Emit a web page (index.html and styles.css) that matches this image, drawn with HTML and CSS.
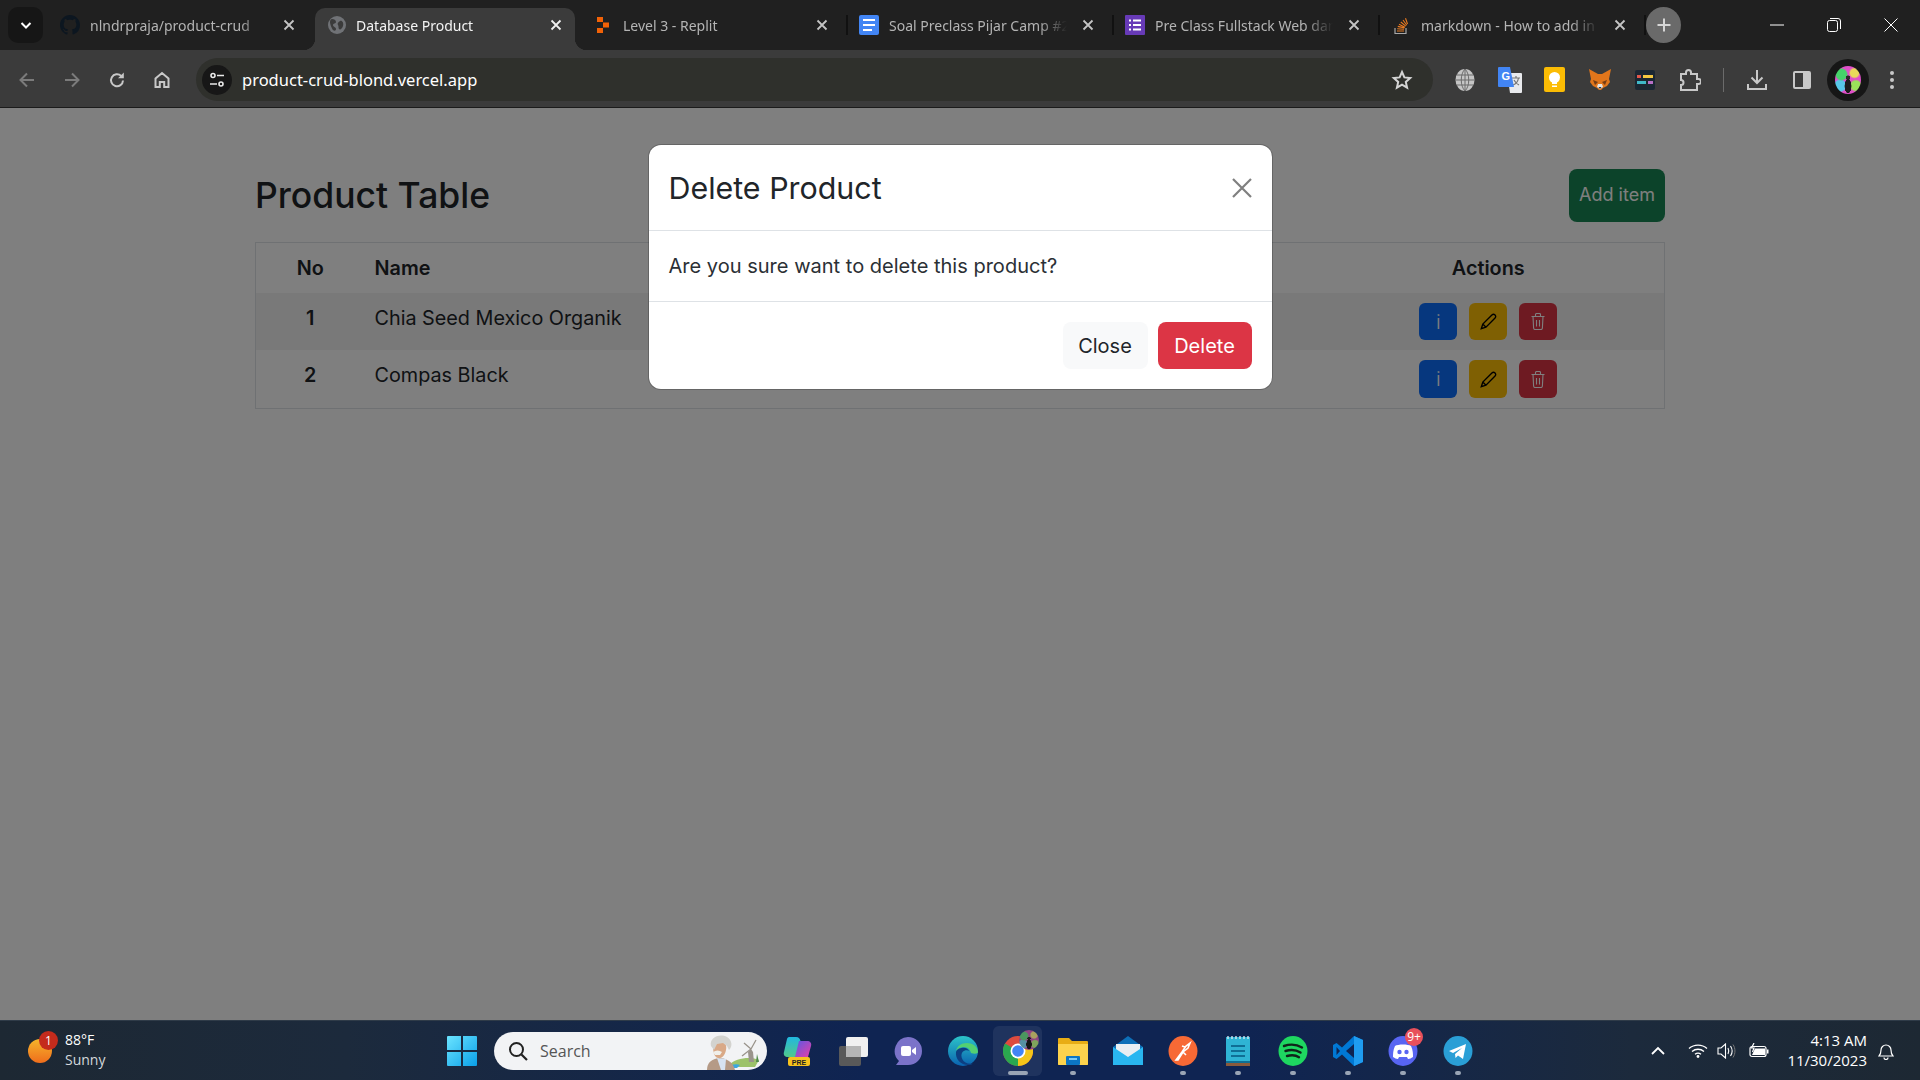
FILE: index.html
```html
<!DOCTYPE html>
<html lang="en">
<head>
  <meta charset="UTF-8" />
  <title>Database Product</title>
  <link rel="stylesheet" href="styles.css">
</head>
<body>
  <!-- Tab strip -->
  <div class="tabstrip">
    <button class="tab-search"><svg width="14" height="14" viewBox="0 0 14 14"><path d="M2.5 5 7 9.5 11.500 5" fill="none" stroke="#fff" stroke-width="2"/></svg></button>

    <div class="tab">
      <svg class="favicon" viewBox="0 0 16 16"><path fill="#0c1620" d="M8 0C3.58 0 0 3.58 0 8c0 3.54 2.29 6.53 5.47 7.59.4.07.55-.17.55-.38 0-.19-.01-.82-.01-1.49-2.01.37-2.53-.49-2.69-.94-.09-.23-.48-.94-.82-1.13-.28-.15-.68-.52-.01-.53.63-.01 1.08.58 1.23.82.72 1.21 1.87.87 2.33.66.07-.52.28-.87.51-1.07-1.78-.2-3.64-.89-3.64-3.95 0-.87.31-1.59.82-2.15-.08-.2-.36-1.02.08-2.12 0 0 .67-.21 2.2.82.64-.18 1.32-.27 2-.27.68 0 1.36.09 2 .27 1.53-1.04 2.2-.82 2.2-.82.44 1.1.16 1.92.08 2.12.51.56.82 1.27.82 2.15 0 3.07-1.87 3.75-3.65 3.95.29.25.54.73.54 1.48 0 1.07-.01 1.93-.01 2.2 0 .21.15.46.55.38A8.013 8.013 0 0016 8c0-4.42-3.58-8-8-8z"/></svg>
      <span class="tab-title">nlndrpraja/product-crud</span>
      <svg class="tab-close" viewBox="0 0 16 16"><path d="M3.500 3.500l9 9m0-9l-9 9" stroke="#c4c4c4" stroke-width="1.800"/></svg>
    </div>

    <div class="tab active">
      <svg class="favicon" viewBox="0 0 20 20"><circle cx="10" cy="10" r="9" fill="#707276"/><path d="M5 4c2 0 4 1 4 3S6 8 6 10s3 2 3 4-2 2-3 1-3-6-3-8 1-3 2-3zM13 6c2-1 4 2 3 5s-3 4-4 3 0-3-1-4 0-3 2-4z" fill="#3b3b3b"/></svg>
      <span class="tab-title">Database Product</span>
      <svg class="tab-close" viewBox="0 0 16 16"><path d="M3.500 3.500l9 9m0-9l-9 9" stroke="#f0f0f0" stroke-width="1.800"/></svg>
    </div>

    <div class="tab">
      <svg class="favicon" viewBox="0 0 20 20"><path fill="#f26207" d="M4 2h6v5H4zM10 7.500h6v5h-6zM4 13h6v5H4z"/></svg>
      <span class="tab-title">Level 3 - Replit</span>
      <svg class="tab-close" viewBox="0 0 16 16"><path d="M3.500 3.500l9 9m0-9l-9 9" stroke="#c4c4c4" stroke-width="1.800"/></svg>
      <i class="tab-sep"></i>
    </div>

    <div class="tab">
      <svg class="favicon" viewBox="0 0 20 20"><rect width="20" height="20" rx="2" fill="#4285f4"/><path fill="#fff" d="M4 4h12v2H4zM4 9h12v2H4zM4 14h9v2H4z"/></svg>
      <span class="tab-title">Soal Preclass Pijar Camp #2</span>
      <svg class="tab-close" viewBox="0 0 16 16"><path d="M3.500 3.500l9 9m0-9l-9 9" stroke="#c4c4c4" stroke-width="1.800"/></svg>
      <i class="tab-sep"></i>
    </div>

    <div class="tab">
      <svg class="favicon" viewBox="0 0 20 20"><rect width="20" height="20" rx="1" fill="#673ab7"/><path fill="#fff" d="M4 4.500h2v2H4zM8 4.500h8v2H8zM4 9h2v2H4zM8 9h8v2H8zM4 13.500h2v2H4zM8 13.500h8v2H8z"/></svg>
      <span class="tab-title">Pre Class Fullstack Web dan</span>
      <svg class="tab-close" viewBox="0 0 16 16"><path d="M3.500 3.500l9 9m0-9l-9 9" stroke="#c4c4c4" stroke-width="1.800"/></svg>
      <i class="tab-sep"></i>
    </div>

    <div class="tab">
      <svg class="favicon" viewBox="0 0 20 20"><path d="M4 13v5.500h11V13" fill="none" stroke="#a8a8a8" stroke-width="1.200"/><path d="M6 16h7M6.200 13.800l6.800.5M6.800 11.400l6.600 1.500M8 9.200l6 3M9.800 7l5 4.200M12 5l3.800 5.300M14.500 3.200l2 5.800" fill="none" stroke="#e87a21" stroke-width="1.100"/></svg>
      <span class="tab-title">markdown - How to add in</span>
      <svg class="tab-close" viewBox="0 0 16 16"><path d="M3.500 3.500l9 9m0-9l-9 9" stroke="#c4c4c4" stroke-width="1.800"/></svg>
      <i class="tab-sep"></i>
    </div>

    <button class="new-tab"><svg width="16" height="16" viewBox="0 0 16 16"><path d="M8 1.500v13M1.500 8h13" stroke="#d6d6d6" stroke-width="2"/></svg></button>

    <div class="window-controls">
      <svg width="14" height="14" viewBox="0 0 14 14"><path d="M0 7h14" stroke="#fff"/></svg>
      <svg width="14" height="14" viewBox="0 0 14 14"><rect x=".5" y="2.500" width="10" height="11" rx="2" fill="none" stroke="#fff"/><path d="M3 .5h8a2.500 2.500 0 0 1 2.500 2.500v8" fill="none" stroke="#fff"/></svg>
      <svg width="14" height="14" viewBox="0 0 14 14"><path d="M.5.5l13 13m0-13l-13 13" stroke="#fff"/></svg>
    </div>
  </div>

  <!-- Address bar -->
  <div class="toolbar">
    <div class="nav-buttons">
      <svg width="18" height="18" viewBox="0 0 18 18"><path d="M16 9H3m6-6.500L2.500 9 9 15.500" fill="none" stroke="#7b7b7b" stroke-width="2"/></svg>
      <svg width="18" height="18" viewBox="0 0 18 18"><path d="M2 9h13M9 2.500 15.500 9 9 15.500" fill="none" stroke="#7b7b7b" stroke-width="2"/></svg>
      <svg width="18" height="18" viewBox="0 0 18 18"><path d="M15 9.500a6 6 0 1 1-1.800-4.600" fill="none" stroke="#c8c8c8" stroke-width="2"/><path d="M15.800 1.500v5.800H10z" fill="#c8c8c8"/></svg>
      <svg width="18" height="18" viewBox="0 0 18 18"><path d="M2.500 16V7.500L9 2l6.500 5.500V16h-4.300v-5H6.800v5z" fill="none" stroke="#c8c8c8" stroke-width="2"/></svg>
    </div>
    <div class="omnibox">
      <span class="site-chip"><svg width="16" height="16" viewBox="0 0 16 16"><g fill="none" stroke="#e8e8e8" stroke-width="1.600"><circle cx="4" cy="3.500" r="2"/><path d="M8 3.500h7M1 12h7"/><circle cx="12" cy="12" r="2"/></g></svg></span>
      <span class="url">product-crud-blond.vercel.app</span>
      <svg class="star" width="22" height="22" viewBox="0 0 22 22"><path d="M11 3l2.400 5.400 5.800.6-4.400 3.900 1.300 5.800L11 15.700l-5.100 3 1.300-5.800L2.800 9l5.800-.6z" fill="none" stroke="#d4d4d4" stroke-width="2"/></svg>
    </div>
    <div class="extensions">
      <span class="ext"><svg width="20" height="24" viewBox="0 0 20 24"><ellipse cx="10" cy="12" rx="9.500" ry="11" fill="#c5c5c5"/><path d="M.5 12h19M1.500 7h17M1.500 17h17M10 1v22M10 1C5 6 5 18 10 23M10 1c5 5 5 17 0 22" fill="none" stroke="#6a6a6a"/></svg></span>
      <span class="ext"><svg width="24" height="26" viewBox="0 0 24 26"><path d="M9 6h14a1 1 0 0 1 1 1v18a1 1 0 0 1-1 1H12z" fill="#e8eaed"/><path d="M14 11h8m-4-2v2m2.500 0c-.5 3-2.500 6-5.500 7m1-5c1 2 3 4 5 5" fill="none" stroke="#777" stroke-width="1.200"/><path d="M1 0h11l4 20H1a1 1 0 0 1-1-1V1a1 1 0 0 1 1-1z" fill="#4285f4"/><text x="3.500" y="13" class="ext-g">G</text></svg></span>
      <span class="ext"><svg width="21" height="25" viewBox="0 0 21 25"><rect width="21" height="25" rx="2" fill="#fbbc04"/><circle cx="10.500" cy="10.500" r="5.500" fill="#fff"/><path d="M8 14h5v3H8z" fill="#fff"/><path d="M8 18.500h5v1.500H8z" fill="#fff"/></svg></span>
      <span class="ext"><svg width="22" height="22" viewBox="0 0 22 22"><path d="M0 0l9 5h4l9-5-2 10 1 3-3 4-4 2-2 2h-2l-2-2-4-2-3-4 1-3z" fill="#e2761b"/><path d="M4 11l5 2-3 3zM18 11l-5 2 3 3z" fill="#763d16"/><path d="M9 15h4l1 3-3 2-3-2z" fill="#e4e4e4"/><path d="M9.500 18h3l-1.500 2z" fill="#233447"/></svg></span>
      <span class="ext"><svg width="20" height="20" viewBox="0 0 20 20"><rect width="20" height="20" rx="2" fill="#1b2733"/><rect x="2" y="5" width="4" height="3" fill="#e2574c"/><rect x="8" y="5" width="10" height="3" fill="#f5c842"/><rect x="2" y="11" width="9" height="3" fill="#3fb9c9"/><rect x="13" y="11" width="5" height="3" fill="#b86fc6"/></svg></span>
      <span class="ext"><svg width="22" height="22" viewBox="0 0 22 22"><path d="M2 5h5V3.500a2.500 2.500 0 0 1 5 0V5h6v5h1.500a2.500 2.500 0 0 1 0 5H18v6H2v-5a2.500 2.500 0 0 0 0-5z" fill="none" stroke="#c8c8c8" stroke-width="2"/></svg></span>
      <i class="toolbar-sep"></i>
      <span class="ext"><svg width="20" height="22" viewBox="0 0 20 22"><path d="M10 1v13m-5.500-5.500L10 14l5.500-5.500M1 15v5h18v-5" fill="none" stroke="#c8c8c8" stroke-width="2"/></svg></span>
      <span class="ext"><svg width="18" height="18" viewBox="0 0 18 18"><rect x="1" y="1" width="16" height="16" rx="1" fill="none" stroke="#c8c8c8" stroke-width="2"/><rect x="10" y="1" width="7" height="16" fill="#c8c8c8"/></svg></span>
      <span class="ext profile"><span class="avatar"></span></span>
      <span class="ext"><svg width="4" height="18" viewBox="0 0 4 18"><circle cx="2" cy="2" r="2" fill="#c8c8c8"/><circle cx="2" cy="9" r="2" fill="#c8c8c8"/><circle cx="2" cy="16" r="2" fill="#c8c8c8"/></svg></span>
    </div>
  </div>

  <!-- Page -->
  <main class="page">
    <div class="container">
      <div class="page-header">
        <h1>Product Table</h1>
        <button class="btn btn-success">Add item</button>
      </div>
      <table class="product-table">
        <thead>
          <tr><th class="col-no">No</th><th class="col-name">Name</th><th class="col-actions">Actions</th></tr>
        </thead>
        <tbody>
          <tr class="striped">
            <th class="col-no">1</th>
            <td>Chia Seed Mexico Organik</td>
            <td class="col-actions">
              <div class="actions">
                <button class="icon-btn blue">i</button>
                <button class="icon-btn yellow"><svg width="17" height="17" viewBox="0 0 20 20"><path d="M1.500 18.500l1.800-5.500L14 2.300a2.300 2.300 0 0 1 3.700 3.700L7 16.700zM3.300 13 7 16.700" fill="none" stroke="#000" stroke-width="1.600"/></svg></button>
                <button class="icon-btn red"><svg width="14" height="17" viewBox="0 0 14 17"><path d="M.5 3.500h13M4.500 3.500V1.500a1 1 0 0 1 1-1h3a1 1 0 0 1 1 1v2M2 3.500l.6 11.500a1.500 1.500 0 0 0 1.500 1.500h5.800a1.500 1.500 0 0 0 1.500-1.500L12 3.500M5.500 7v6.500M8.500 7v6.500" fill="none" stroke="#fff" stroke-width="1.100"/></svg></button>
              </div>
            </td>
          </tr>
          <tr>
            <th class="col-no">2</th>
            <td>Compas Black</td>
            <td class="col-actions">
              <div class="actions">
                <button class="icon-btn blue">i</button>
                <button class="icon-btn yellow"><svg width="17" height="17" viewBox="0 0 20 20"><path d="M1.500 18.500l1.800-5.500L14 2.300a2.300 2.300 0 0 1 3.700 3.700L7 16.700zM3.300 13 7 16.700" fill="none" stroke="#000" stroke-width="1.600"/></svg></button>
                <button class="icon-btn red"><svg width="14" height="17" viewBox="0 0 14 17"><path d="M.5 3.500h13M4.500 3.500V1.500a1 1 0 0 1 1-1h3a1 1 0 0 1 1 1v2M2 3.500l.6 11.500a1.500 1.500 0 0 0 1.500 1.500h5.800a1.500 1.500 0 0 0 1.500-1.500L12 3.500M5.500 7v6.500M8.500 7v6.500" fill="none" stroke="#fff" stroke-width="1.100"/></svg></button>
              </div>
            </td>
          </tr>
        </tbody>
      </table>
    </div>

    <!-- Delete modal -->
    <div class="backdrop">
      <div class="modal">
        <div class="modal-header">
          <h5>Delete Product</h5>
          <svg class="modal-close" width="20" height="20" viewBox="0 0 20 20"><path d="M1 1l18 18M19 1 1 19" stroke="#7f7f7f" stroke-width="2.200"/></svg>
        </div>
        <div class="modal-body">Are you sure want to delete this product?</div>
        <div class="modal-footer">
          <button class="btn btn-light">Close</button>
          <button class="btn btn-danger">Delete</button>
        </div>
      </div>
    </div>
  </main>

  <!-- Taskbar -->
  <footer class="taskbar">
    <div class="weather">
      <span class="sun"><span class="sun-badge">1</span></span>
      <div class="weather-text">
        <span>88°F</span>
        <span class="weather-sub">Sunny</span>
      </div>
    </div>

    <div class="task-center">
      <svg class="start" width="30" height="30" viewBox="0 0 30 30"><defs><linearGradient id="win" x1="0" y1="0" x2="1" y2="1"><stop offset="0" stop-color="#6be4ff"/><stop offset="1" stop-color="#0a9fe8"/></linearGradient></defs><path fill="url(#win)" d="M0 1a1 1 0 0 1 1-1h13v14H0zM16 0h13a1 1 0 0 1 1 1v13H16zM0 16h14v14H1a1 1 0 0 1-1-1zM16 16h14v13a1 1 0 0 1-1 1H16z"/></svg>

      <div class="search-pill">
        <svg width="20" height="20" viewBox="0 0 20 20"><circle cx="8.500" cy="8.500" r="6.500" fill="none" stroke="#222" stroke-width="2"/><path d="M13.500 13.500 19 19" stroke="#222" stroke-width="2.200"/></svg>
        <span>Search</span>
        <svg class="search-art" width="60" height="38" viewBox="0 0 60 38">
          <path d="M26 33c6-7 22-9 30-5l-4 7H30z" fill="#9cc26a"/>
          <path d="M28 33c4-1 7-1 9 0l-3 3h-5z" fill="#3aa7e0"/>
          <path d="M46 30l-1-10 3-3 2 3 1 10z" fill="#9a948c"/>
          <path d="M48 17l-7-6M48 17l5-9M48 17l-9 7" stroke="#9a948c" stroke-width="1.300"/>
          <path d="M53 30l1-8 2 8z" fill="#4f8a4a"/>
          <path d="M4 38c0-8 5-11 12-12 6 0 14 3 16 12z" fill="#b59a86"/>
          <path d="M14 26l4 12h4l1-11z" fill="#d7e3f2"/>
          <path d="M10 15c0-4 4-7 8-6s6 4 5 9-4 9-8 8-5-7-5-11z" fill="#d9a987"/>
          <path d="M8 14C6 6 16 1 24 5c5 3 6 9 2 13l-2-4-4-3-6 1-3 6z" fill="#d3d3cf"/>
          <path d="M10 20c3-2 6-2 9 0l-2 3h-5z" fill="#f0efea"/>
        </svg>
      </div>

      <div class="task-icons">
        <span class="task-icon"><svg width="30" height="30" viewBox="0 0 30 30"><defs><linearGradient id="cop1" x1="0" y1="0" x2="0" y2="1"><stop offset="0" stop-color="#21b8e0"/><stop offset="1" stop-color="#52c98a"/></linearGradient><linearGradient id="cop2" x1="0" y1="0" x2="1" y2="1"><stop offset="0" stop-color="#5a58e6"/><stop offset="1" stop-color="#e83fa6"/></linearGradient></defs><path d="M6 1h7c3 0 4 2 4.500 4L13 21H5c-3 0-5-2-4-5L4 3c.3-1 1-2 2-2z" fill="url(#cop1)"/><path d="M16 5h8c3 0 5 2 4 5l-3 11H12z" fill="url(#cop2)"/><rect x="5" y="21" width="22" height="9" rx="2" fill="#f8c31d"/><text x="16" y="28.500" class="pre">PRE</text></svg></span>
        <span class="task-icon"><svg width="30" height="30" viewBox="0 0 30 30"><rect x="1" y="10" width="22" height="20" rx="2" fill="#595959"/><rect x="8" y="1" width="22" height="20" rx="2" fill="#f0f0f0"/><rect x="8" y="10" width="15" height="11" fill="#b5b5b5"/></svg></span>
        <span class="task-icon"><svg width="30" height="30" viewBox="0 0 30 30"><path d="M15 1a14 14 0 0 1 14 14c0 8-6 14-14 14H3l3-4a14 14 0 0 1 9-24z" fill="#7b73c9"/><rect x="8" y="10" width="10" height="10" rx="2" fill="#fff"/><path d="M19 14l4-3v8l-4-3z" fill="#fff"/></svg></span>
        <span class="task-icon"><svg width="32" height="32" viewBox="0 0 32 32"><defs><linearGradient id="edge" x1="0" y1="0" x2="0" y2="1"><stop offset="0" stop-color="#2cc4c8"/><stop offset="1" stop-color="#0a62b0"/></linearGradient></defs><circle cx="16" cy="16" r="15" fill="url(#edge)"/><path d="M31 17c-.3-6-6-9-11-9-6 0-10 3-11 8 2-3 5-4 8-4 3 0 6 2 7 6 3 1 7 1 7-1z" fill="#53d072"/><path d="M9 17c-1 7 5 13 12 13 2 0 4-.5 5-1.500-5 1-9-1-10.500-4C14 22 14 19 15.500 17c2-2 5-2 7-1-2-3-5-4-8-3-3 .5-5 2-5.500 4z" fill="#0d3f82"/></svg></span>
        <span class="task-icon current"><svg width="30" height="30" viewBox="0 0 30 30"><circle cx="15" cy="15" r="15" fill="#dd4b3e"/><path d="M15 15 28 7.500A15 15 0 0 1 15 30z" fill="#f5c518"/><path d="M15 15 15 30A15 15 0 0 1 2 7.500z" fill="#2aa84f"/><circle cx="15" cy="15" r="7.500" fill="#fff"/><circle cx="15" cy="15" r="5.800" fill="#4285f4"/></svg><span class="avatar chrome-badge"></span></span>
        <span class="task-icon"><svg width="30" height="30" viewBox="0 0 30 30"><path d="M0 3a1 1 0 0 1 1-1h10l3 3h15a1 1 0 0 1 1 1v22a1 1 0 0 1-1 1H1a1 1 0 0 1-1-1z" fill="#e8ad15"/><path d="M0 8h30v20a1 1 0 0 1-1 1H1a1 1 0 0 1-1-1z" fill="#fdd34d"/><rect x="8" y="20" width="14" height="9" rx="1" fill="#0c76c4"/><rect x="11" y="22" width="8" height="2" fill="#7ccbf5"/></svg></span>
        <span class="task-icon"><svg width="30" height="30" viewBox="0 0 30 30"><path d="M0 11 15 0l15 11v18H0z" fill="#0d6fb8"/><path d="M3 8h24v6l-12 8-12-8z" fill="#e9eef2"/><path d="M0 11l15 10 15-10v18H0z" fill="#29b6f0"/></svg></span>
        <span class="task-icon"><svg width="30" height="30" viewBox="0 0 30 30"><ellipse cx="15" cy="15" rx="14.500" ry="15" fill="#f76935"/><path d="M8 24l6-8 4-6 4-3-2 5-5 4-5 8zM17 11l-3-1m1 6 3 3" fill="none" stroke="#fff" stroke-width="1.600"/></svg></span>
        <span class="task-icon"><svg width="24" height="30" viewBox="0 0 24 30"><rect y="1" width="24" height="29" fill="#2fb4d4"/><rect y="27" width="24" height="3" fill="#8a5a3c"/><path d="M0 25h24v2H0zM5 9h14v2H5zM5 14h14v2H5zM5 19h14v2H5z" fill="#0f6f95"/><path d="M2 0v3M6 0v3M10 0v3M14 0v3M18 0v3M22 0v3" stroke="#cfeaf2" stroke-width="1.400"/></svg></span>
        <span class="task-icon"><svg width="30" height="30" viewBox="0 0 30 30"><ellipse cx="15" cy="15" rx="14.500" ry="15" fill="#1ed760"/><path d="M6 10c6-2 13-1.500 18 1.500M7.500 15c5-1.500 11-1 15 1.500M9 20c4-1 9-.8 12 1.200" fill="none" stroke="#10241a" stroke-width="2.400" stroke-linecap="round"/></svg></span>
        <span class="task-icon"><svg width="30" height="30" viewBox="0 0 30 30"><path d="M21 0l9 4v22l-9 4-12-11.500L3.500 23 0 21v-12l3.500-2L9 11.500z" fill="#0078d4"/><path d="M21 0l9 4v22l-9 4z" fill="#1f9cf0"/><path d="M21 8l-8 7 8 7z" fill="#0f2452"/><path d="M3.500 11v8L7 15z" fill="#0f2452"/></svg></span>
        <span class="task-icon"><svg width="30" height="30" viewBox="0 0 30 30"><ellipse cx="15" cy="15" rx="14.500" ry="15" fill="#5865f2"/><path d="M7 10c3-2 13-2 16 0 2 4 2 8 2 11-2 1-3 2-5 2l-1-2H11l-1 2c-2 0-3-1-5-2 0-3 0-7 2-11z" fill="#fff"/><circle cx="11.500" cy="16" r="2.200" fill="#5865f2"/><circle cx="18.500" cy="16" r="2.200" fill="#5865f2"/></svg><span class="discord-badge">9+</span></span>
        <span class="task-icon"><svg width="30" height="30" viewBox="0 0 30 30"><ellipse cx="15" cy="15" rx="14.500" ry="15" fill="#2a9fd6"/><path d="M6 15 23 8l-3 15-5-3.500-2.500 2.500-.5-4 7-6-9 5z" fill="#fff"/></svg></span>
      </div>
    </div>

    <div class="tray">
      <svg width="14" height="9" viewBox="0 0 14 9"><path d="M1 8l6-6 6 6" fill="none" stroke="#fff" stroke-width="1.800"/></svg>
      <svg class="wifi" width="20" height="15" viewBox="0 0 20 15"><path d="M1 5.500c5-4.500 13-4.500 18 0M4 8.500c3.500-3 8.500-3 12 0M7 11.300c1.800-1.400 4.200-1.400 6 0" fill="none" stroke="#fff" stroke-width="1.300"/><circle cx="10" cy="13.500" r="1.400" fill="#fff"/></svg>
      <svg class="speaker" width="20" height="16" viewBox="0 0 20 16"><path d="M1 5h3l4.500-4v14L4 11H1z" fill="none" stroke="#fff" stroke-width="1.100"/><path d="M11 5c1 2 1 4 0 6M13.500 3c2 3 2 7 0 10" fill="none" stroke="#fff" stroke-width="1.100"/><path d="M16 1.500c2.600 4 2.600 9 0 13" fill="none" stroke="#777" stroke-width="1"/></svg>
      <svg class="battery" width="20" height="15" viewBox="0 0 20 15"><rect x="1" y="3.500" width="16" height="10" rx="2" fill="none" stroke="#fff" stroke-width="1.200"/><path d="M3 12l3-6.500h10V12z" fill="#fff"/><rect x="18" y="6.500" width="1.500" height="4" fill="#fff"/><path d="M5 0 2.500 5H5L3.500 9" fill="none" stroke="#fff" stroke-width="1.200"/></svg>
    </div>
    <div class="clock">
      <span>4:13 AM</span>
      <span>11/30/2023</span>
    </div>
    <svg class="bell" width="16" height="18" viewBox="0 0 16 18"><path d="M1 14c1.500-1.500 2-3 2-6a5 5 0 0 1 10 0c0 3 .5 4.500 2 6zM6 15.500a2 2 0 0 0 4 0" fill="none" stroke="#fff" stroke-width="1.200"/></svg>
  </footer>
</body>
</html>
```

FILE: styles.css
```css
* {
  box-sizing: border-box;
}
body {
  margin: 0;
  height: 100vh;
  display: flex;
  flex-direction: column;
  overflow: hidden;
  font-family: Inter, sans-serif;
  background: #fff;
  color: #212529;
}
button {
  border: none;
  font-family: inherit;
  padding: 0;
}

/* tab strip */
.tabstrip {
  height: 50px;
  flex: none;
  display: flex;
  align-items: flex-end;
  padding-left: 8px;
  background: #202020;
  font-family: "Noto Sans", sans-serif;
  font-size: 14px;
}
.tab-search {
  width: 35px;
  height: 36px;
  margin: 0 6px 7px 0;
  border-radius: 10px;
  background: #161616;
  display: flex;
  align-items: center;
  justify-content: center;
}
.tab {
  position: relative;
  width: 266px;
  height: 42px;
  padding: 0 0 8px 11px;
  display: flex;
  align-items: center;
  color: #b4b4b4;
}
.tab.active {
  width: 260px;
  margin-right: 7px;
  padding-left: 12px;
  background: #3b3b3b;
  color: #f4f4f4;
  border-radius: 10px 10px 0 0;
}
.tab.active::before,
.tab.active::after {
  content: "";
  position: absolute;
  bottom: 0;
  width: 12px;
  height: 12px;
}
.tab.active::before {
  left: -12px;
  background: radial-gradient(circle at 0 0, transparent 12px, #3b3b3b 12.5px);
}
.tab.active::after {
  right: -12px;
  background: radial-gradient(circle at 100% 0, transparent 12px, #3b3b3b 12.5px);
}
.favicon {
  width: 20px;
  height: 20px;
  flex: none;
  margin-right: 10px;
}
.tab.active .favicon {
  margin-right: 9px;
}
.tab.active .tab-close {
  margin-left: 14px;
}
.tab-title {
  width: 178px;
  flex: none;
  white-space: nowrap;
  overflow: hidden;
  -webkit-mask-image: linear-gradient(to right, #000 84%, transparent);
  mask-image: linear-gradient(to right, #000 84%, transparent);
}
.tab-close {
  width: 16px;
  height: 16px;
  flex: none;
  margin-left: 13px;
}
.tab-sep {
  width: 2px;
  height: 20px;
  margin-left: 16px;
  background: #111;
}
.new-tab {
  width: 35px;
  height: 36px;
  margin: 0 0 7px 0;
  border-radius: 50%;
  background: #6a6a6a;
  display: flex;
  align-items: center;
  justify-content: center;
}
.window-controls {
  margin-left: auto;
  height: 50px;
  display: flex;
  align-items: center;
  gap: 43px;
  padding: 0 22px 0 0;
}

/* address bar */
.toolbar {
  height: 58px;
  flex: none;
  display: flex;
  align-items: center;
  padding-top: 2px;
  background: #3b3b3b;
  border-bottom: 1px solid #1b1b1b;
}
.nav-buttons {
  display: flex;
  flex: none;
  width: 196px;
  padding-left: 18px;
  gap: 27px;
}
.omnibox {
  flex: none;
  width: 1237px;
  height: 43px;
  display: flex;
  align-items: center;
  padding-left: 6px;
  border-radius: 22px;
  background: #2f302c;
}
.site-chip {
  width: 30px;
  height: 30px;
  display: flex;
  align-items: center;
  justify-content: center;
  border-radius: 50%;
  background: #171717;
}
.url {
  margin-left: 10px;
  font-family: "Noto Sans", sans-serif;
  font-size: 16.500px;
  color: #fff;
}
.star {
  margin-left: auto;
  margin-right: 20px;
}
.extensions {
  display: flex;
  flex: none;
  align-items: center;
  margin-left: 9px;
}
.ext {
  flex: none;
  width: 45px;
  height: 42px;
  display: flex;
  align-items: center;
  justify-content: center;
}
.ext-g {
  font: bold 11px "Liberation Sans", sans-serif;
  fill: #fff;
}
.toolbar-sep {
  flex: none;
  width: 1px;
  height: 24px;
  margin: 0 10px 0 11px;
  background: #6b6b6b;
}
.profile {
  width: 42px;
  margin: 0 0 0 3px;
  border-radius: 50%;
  background: #161616;
}
.avatar {
  display: block;
  width: 26px;
  height: 28px;
  border-radius: 50%;
  background:
    radial-gradient(ellipse 14% 26% at 50% 72%, #1d1d1d 90%, transparent),
    radial-gradient(circle at 50% 42%, #2a2a2a 0 10%, transparent 12%),
    radial-gradient(circle at 25% 30%, #45d36a 0 18%, transparent 24%),
    radial-gradient(circle at 75% 25%, #e9d95a 0 14%, transparent 20%),
    radial-gradient(circle at 20% 70%, #57c8e8 0 18%, transparent 24%),
    radial-gradient(circle at 80% 70%, #9be25a 0 16%, transparent 22%),
    #e04fc8;
}

/* page */
.page {
  position: relative;
  flex: 1;
  min-height: 0;
}
.container {
  width: 1410px;
  margin: 0 auto;
  padding-top: 61px;
}
.page-header {
  display: flex;
  align-items: center;
  justify-content: space-between;
  margin-bottom: 20px;
}
h1 {
  margin: 0;
  font-size: 35.500px;
  font-weight: 500;
}
.btn {
  height: 47px;
  font-size: 20px;
  border-radius: 8px;
}
.btn-success {
  width: 96px;
  height: 53px;
  padding-bottom: 2px;
  font-size: 18px;
  background: #198754;
  color: #fff;
}
.btn-light {
  width: 85px;
  background: #f8f9fa;
  color: #212529;
}
.btn-danger {
  width: 94px;
  background: #dc3545;
  color: #fff;
}
.product-table {
  width: 100%;
  border-collapse: collapse;
  border: 1px solid #dee2e6;
  font-size: 19.800px;
  line-height: 30px;
}
.product-table th,
.product-table td {
  padding: 10px;
  vertical-align: top;
  text-align: left;
  font-weight: 400;
}
.product-table th {
  font-weight: 600;
}
.product-table .col-no {
  width: 109px;
  text-align: center;
}
.product-table .col-actions {
  width: 352px;
  text-align: center;
}
.product-table .striped {
  background: #f2f2f2;
}
.actions {
  display: flex;
  justify-content: center;
  gap: 12px;
}
.icon-btn {
  width: 38px;
  height: 37px;
  display: flex;
  align-items: center;
  justify-content: center;
  border-radius: 6px;
  color: #fff;
  font-size: 20px;
  font-weight: 300;
}
tr:last-child .icon-btn {
  height: 38px;
}
.blue {
  background: #0d6efd;
}
.yellow {
  background: #ffc107;
}
.red {
  background: #dc3545;
}

/* modal, sits on top of the page */
.backdrop {
  position: absolute;
  inset: 0;
  display: flex;
  justify-content: center;
  align-items: flex-start;
  padding-top: 37px;
  background: rgba(0, 0, 0, 0.5);
}
.modal {
  width: 623px;
  border-radius: 12px;
  background: #fff;
  box-shadow: 0 0 0 1px rgba(0, 0, 0, 0.2);
}
.modal-header {
  height: 86px;
  display: flex;
  align-items: center;
  justify-content: space-between;
  padding: 0 20px;
  border-bottom: 1px solid #dee2e6;
}
h5 {
  margin: 0;
  font-size: 30.400px;
  font-weight: 400;
}
.modal-body {
  height: 71px;
  padding: 20px;
  font-size: 20.050px;
  line-height: 30px;
  color: #2b3035;
  border-bottom: 1px solid #dee2e6;
}
.modal-footer {
  display: flex;
  justify-content: flex-end;
  gap: 10px;
  padding: 20px;
}

/* taskbar */
.taskbar {
  height: 60px;
  flex: none;
  display: flex;
  align-items: center;
  position: relative;
  border-top: 1px solid #2f3b48;
  background: linear-gradient(to right, #1d2833 0, #1c2a3c 18%, #0f2452 45%, #0f2452 65%, #1c2a3c 85%, #1d2833 100%);
  font-family: "Open Sans", sans-serif;
  font-size: 14px;
  color: #fff;
}
.weather {
  display: flex;
  flex: none;
  align-items: center;
  width: 447px;
  padding-left: 28px;
  gap: 13px;
}
.sun {
  position: relative;
  width: 24px;
  height: 24px;
  border-radius: 50%;
  background: linear-gradient(#f5b52b, #ef6d1c);
}
.sun-badge {
  position: absolute;
  top: -8px;
  left: 11px;
  width: 19px;
  height: 19px;
  border-radius: 50%;
  background: #c42b1c;
  font-size: 12px;
  line-height: 19px;
  text-align: center;
}
.weather-text {
  display: flex;
  flex-direction: column;
  margin-top: -2px;
  line-height: 20px;
}
.weather-sub {
  color: #d4d8dc;
}
.task-center {
  display: flex;
  align-items: center;
}
.search-pill {
  width: 273px;
  height: 38px;
  margin-left: 17px;
  display: flex;
  align-items: center;
  padding-left: 14px;
  border-radius: 19px;
  background: #f2f3f5;
  color: #555;
  font-size: 16px;
  overflow: hidden;
}
.search-pill span {
  margin-left: 12px;
}
.search-art {
  margin-left: auto;
  margin-right: 4px;
}
.task-icons {
  display: flex;
  margin-left: 3px;
}
.task-icon {
  position: relative;
  width: 55px;
  height: 50px;
  display: flex;
  align-items: center;
  justify-content: center;
}
.current {
  width: 49px;
  margin: 0 3px;
  border-radius: 6px;
  background: rgba(255, 255, 255, 0.07);
}
.task-icon:nth-child(n+6):not(:nth-child(7))::after,
.current::after {
  content: "";
  position: absolute;
  bottom: 1px;
  left: 50%;
  width: 6px;
  height: 4px;
  margin-left: -3px;
  border-radius: 2px;
  background: #9aa5b5;
}
.current::after {
  width: 20px;
  margin-left: -10px;
}
.chrome-badge {
  position: absolute;
  top: 4px;
  left: 26px;
  width: 20px;
  height: 20px;
  filter: saturate(0.7) brightness(0.75);
}
.discord-badge {
  position: absolute;
  top: 2px;
  left: 30px;
  width: 18px;
  height: 18px;
  border-radius: 50%;
  background: #e8505b;
  font-size: 12px;
  line-height: 18px;
  text-align: center;
}
.pre {
  font: bold 7px "Liberation Sans", sans-serif;
  fill: #222;
  text-anchor: middle;
}
.tray {
  display: flex;
  align-items: center;
  margin-left: auto;
}
.wifi {
  margin-left: 23px;
}
.speaker {
  margin-left: 9px;
}
.battery {
  margin-left: 12px;
}
.clock {
  display: flex;
  flex-direction: column;
  align-items: flex-end;
  width: 98px;
  margin-top: -2px;
  font-size: 15px;
  line-height: 20px;
}
.bell {
  margin: 0 26px 0 11px;
}
```
